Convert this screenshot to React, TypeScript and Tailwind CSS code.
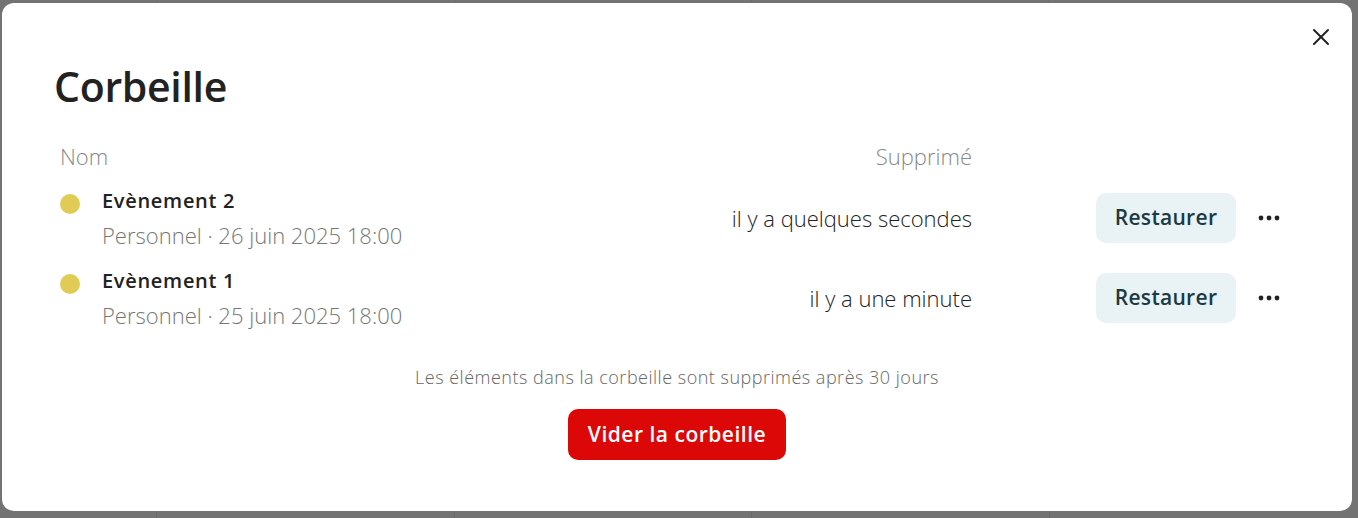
import React from "react";

const rows = [
  { title: "Evènement 2", sub: "Personnel · 26 juin 2025 18:00", time: "il y a quelques secondes" },
  { title: "Evènement 1", sub: "Personnel · 25 juin 2025 18:00", time: "il y a une minute" },
];

function Dots() {
  return (
    <svg width="22" height="6" viewBox="0 0 22 6" fill="#222">
      <circle cx="3" cy="3" r="2.4" />
      <circle cx="11" cy="3" r="2.4" />
      <circle cx="19" cy="3" r="2.4" />
    </svg>
  );
}

export default function App() {
  return (
    <div
      className="relative w-[1358px] h-[518px] overflow-hidden bg-[#737373]"
      style={{ fontFamily: '"Open Sans", "Noto Sans", sans-serif' }}
    >
      {/* backdrop calendar grid */}
      <div className="grid grid-cols-[157px_298px_297px_298px_1fr] h-full">
        <div className="border-r border-[#6b6b6b]" />
        <div className="border-r border-[#6b6b6b]" />
        <div className="border-r border-[#6b6b6b]" />
        <div className="border-r border-[#6b6b6b]" />
        <div />
      </div>

      {/* modal */}
      <div className="absolute left-[2px] top-[3px] w-[1350px] h-[508px] bg-white rounded-[12px] text-[#222]">
        <button className="absolute right-[21px] top-[24px] w-[20px] h-[20px] flex items-center justify-center">
          <svg width="18" height="18" viewBox="0 0 18 18" stroke="#222" strokeWidth="2" strokeLinecap="round">
            <line x1="2" y1="2" x2="16" y2="16" />
            <line x1="16" y1="2" x2="2" y2="16" />
          </svg>
        </button>

        <div className="pl-[52px] pt-[60px]">
          <h1 className="text-[41px] leading-[46px] font-semibold tracking-[-0.3px] text-[#222]">Corbeille</h1>
        </div>

        <div className="ml-[58px] w-[1220px] mt-[31px]">
          <div className="flex items-center h-[32px] text-[22px] font-light text-[#888]">
            <div className="flex-1">Nom</div>
            <div>Supprimé</div>
            <div className="w-[308px]" />
          </div>

          <div className="mt-[6px]">
            {rows.map((r) => (
              <div key={r.title} className="flex items-center h-[80px]">
                <div className="flex-1 flex items-start pt-[2px]">
                  <div className="w-[20px] h-[20px] rounded-full bg-[#e0cb55] mt-[6px] shrink-0" />
                  <div className="ml-[22px]">
                    <div className="text-[20px] leading-[26px] font-semibold tracking-[0.7px] text-[#222]">{r.title}</div>
                    <div className="text-[22px] leading-[30px] font-light text-[#777] mt-[6px]">{r.sub}</div>
                  </div>
                </div>
                <div className="text-[22px] font-light text-[#222]">{r.time}</div>
                <button className="ml-[124px] w-[140px] h-[50px] rounded-[10px] bg-[#e9f2f5] text-[21px] font-semibold tracking-[0.3px] text-[#1c3a44]">
                  Restaurer
                </button>
                <div className="ml-[22px] w-[22px] flex items-center justify-center">
                  <Dots />
                </div>
              </div>
            ))}
          </div>
        </div>

        <div className="flex flex-col items-center mt-[27px]">
          <div className="text-[18px] leading-[24px] font-light tracking-[0.5px] text-[#666]">
            Les éléments dans la corbeille sont supprimés après 30 jours
          </div>
          <button className="mt-[20px] w-[218px] h-[51px] rounded-[10px] bg-[#dc0707] text-white text-[21px] font-semibold tracking-[0.5px]">
            Vider la corbeille
          </button>
        </div>
      </div>
    </div>
  );
}
